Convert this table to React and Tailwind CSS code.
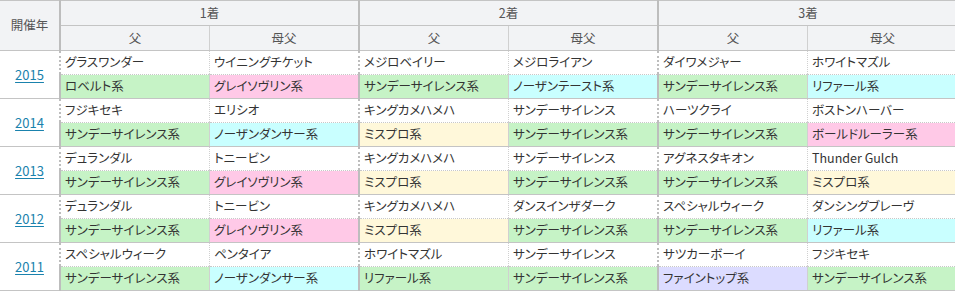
const colors = {
  green: "bg-[#c6f3c6]",
  pink: "bg-[#ffc9e7]",
  cyan: "bg-[#c9ffff]",
  yellow: "bg-[#fff8da]",
  lavender: "bg-[#dcdcff]",
};

const rows = [
  {
    year: "2015",
    horses: [
      ["グラスワンダー", "ロベルト系", "green"],
      ["ウイニングチケット", "グレイソヴリン系", "pink"],
      ["メジロベイリー", "サンデーサイレンス系", "green"],
      ["メジロライアン", "ノーザンテースト系", "cyan"],
      ["ダイワメジャー", "サンデーサイレンス系", "green"],
      ["ホワイトマズル", "リファール系", "cyan"],
    ],
  },
  {
    year: "2014",
    horses: [
      ["フジキセキ", "サンデーサイレンス系", "green"],
      ["エリシオ", "ノーザンダンサー系", "cyan"],
      ["キングカメハメハ", "ミスプロ系", "yellow"],
      ["サンデーサイレンス", "サンデーサイレンス系", "green"],
      ["ハーツクライ", "サンデーサイレンス系", "green"],
      ["ボストンハーバー", "ボールドルーラー系", "pink"],
    ],
  },
  {
    year: "2013",
    horses: [
      ["デュランダル", "サンデーサイレンス系", "green"],
      ["トニービン", "グレイソヴリン系", "pink"],
      ["キングカメハメハ", "ミスプロ系", "yellow"],
      ["サンデーサイレンス", "サンデーサイレンス系", "green"],
      ["アグネスタキオン", "サンデーサイレンス系", "green"],
      ["Thunder Gulch", "ミスプロ系", "yellow"],
    ],
  },
  {
    year: "2012",
    horses: [
      ["デュランダル", "サンデーサイレンス系", "green"],
      ["トニービン", "グレイソヴリン系", "pink"],
      ["キングカメハメハ", "ミスプロ系", "yellow"],
      ["ダンスインザダーク", "サンデーサイレンス系", "green"],
      ["スペシャルウィーク", "サンデーサイレンス系", "green"],
      ["ダンシングブレーヴ", "リファール系", "cyan"],
    ],
  },
  {
    year: "2011",
    horses: [
      ["スペシャルウィーク", "サンデーサイレンス系", "green"],
      ["ペンタイア", "ノーザンダンサー系", "cyan"],
      ["ホワイトマズル", "リファール系", "green"],
      ["サンデーサイレンス", "サンデーサイレンス系", "green"],
      ["サツカーボーイ", "ファイントップ系", "lavender"],
      ["フジキセキ", "サンデーサイレンス系", "green"],
    ],
  },
];

// left border per column: thick at group start, thin between 父 and 母父
const sideBorder = (i) => (i % 2 === 0 ? "border-l-2 border-l-[#bdbdbd]" : "border-l border-l-[#d0d0d0]");

export default function App() {
  return (
    <div className="w-[955px] overflow-hidden bg-white font-['Noto_Sans_CJK_JP','Noto_Sans',sans-serif] text-[12.5px] text-[#333] [font-feature-settings:'palt']">
      <table className="w-[957px] table-fixed border-collapse">
        <colgroup>
          <col className="w-[60px]" />
          {[0, 1, 2, 3, 4, 5].map((i) => (
            <col key={i} className="w-[149.5px]" />
          ))}
        </colgroup>
        <thead>
          <tr className="h-[25px] bg-[#f2f3f5] text-[#555]">
            <th rowSpan={2} className="border-t border-b border-[#c4c4c4] text-[12.5px] font-normal">
              開催年
            </th>
            {["1着", "2着", "3着"].map((h) => (
              <th key={h} colSpan={2} className="border-t border-b border-l-2 border-[#c4c4c4] border-l-[#bdbdbd] font-normal">
                {h}
              </th>
            ))}
          </tr>
          <tr className="h-[25px] bg-[#f2f3f5] text-[#555]">
            {[0, 1, 2, 3, 4, 5].map((i) => (
              <th key={i} className={`border-b border-[#c4c4c4] font-normal ${sideBorder(i)}`}>
                {i % 2 === 0 ? "父" : "母父"}
              </th>
            ))}
          </tr>
        </thead>
        <tbody>
          {rows.map((row) => (
            <RaceRows key={row.year} row={row} />
          ))}
        </tbody>
      </table>
    </div>
  );
}

function RaceRows({ row }) {
  return (
    <>
      <tr className="h-[24px]">
        <td rowSpan={2} className="border-b border-[#c4c4c4] text-center text-[13px]">
          <a href="#" className="text-[#1a82ad] underline underline-offset-2">
            {row.year}
          </a>
        </td>
        {row.horses.map(([name], i) => (
          <td key={i} className={`border-b border-dotted border-b-[#c8c8c8] px-[4px] whitespace-nowrap ${sideBorder(i)}`}>
            {name}
          </td>
        ))}
      </tr>
      <tr className="h-[24px]">
        {row.horses.map(([, line, color], i) => (
          <td key={i} className={`border-b border-[#c4c4c4] px-[4px] whitespace-nowrap ${colors[color]} ${sideBorder(i)}`}>
            {line}
          </td>
        ))}
      </tr>
    </>
  );
}
